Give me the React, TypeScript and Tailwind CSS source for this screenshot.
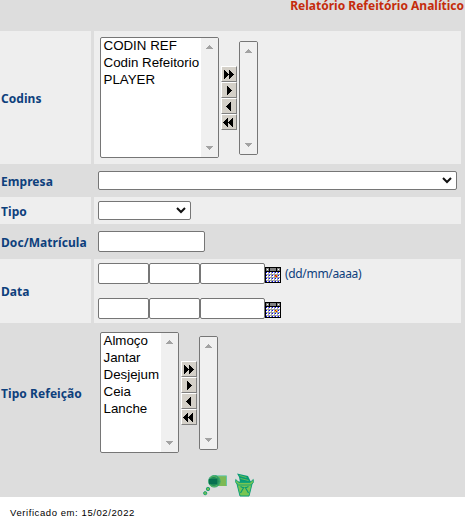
import React from "react";

type ListProps = { items: string[]; className: string };

function ScrollTrack() {
  return (
    <div className="flex w-[17px] shrink-0 flex-col items-center justify-between bg-[#f0f0f0] py-[7px]">
      <svg width="7" height="4" viewBox="0 0 7 4" shapeRendering="crispEdges">
        <path d="M3 0h1v1h1v1h1v1h1v1H0V3h1V2h1V1h1z" fill="#a3a3a3" />
      </svg>
      <svg width="7" height="4" viewBox="0 0 7 4" shapeRendering="crispEdges">
        <path d="M0 0h7v1H6v1H5v1H4v1H3V3H2V2H1V1H0z" fill="#a3a3a3" />
      </svg>
    </div>
  );
}

function ListBox({ items, className }: ListProps) {
  return (
    <div className={`flex h-[121px] shrink-0 overflow-hidden rounded-[2px] border border-[#767676] bg-white ${className}`}>
      <ul className="-mt-px min-w-0 flex-1 pl-[2.5px] font-['Liberation_Sans',Arial,sans-serif] text-[13.33px] leading-[17px] whitespace-nowrap text-black">
        {items.map((item) => (
          <li key={item}>{item}</li>
        ))}
      </ul>
      <ScrollTrack />
    </div>
  );
}

const arrows = [
  "M2 2h1v1h1v1h1v1h1v1h1v1H6v1H5v1H4v1H3v1H2zM7 2h1v1h1v1h1v1h1v1h1v1h-1v1h-1v1H9v1H8v1H7z",
  "M5 2h1v1h1v1h1v1h1v1h1v1H9v1H8v1H7v1H6v1H5z",
  "M9 2v9H8v-1H7V9H6V8H5V7H4V6h1V5h1V4h1V3h1V2z",
  "M6 2v9H5v-1H4V9H3V8H2V7H1V6h1V5h1V4h1V3h1V2zM11 2v9h-1v-1H9V9H8V8H7V7H6V6h1V5h1V4h1V3h1V2z",
];

function MoveButtons() {
  return (
    <div className="flex w-4 shrink-0 flex-col">
      {arrows.map((d) => (
        <button
          key={d}
          className="flex h-4 w-4 items-center border border-t-white border-r-[#808080] border-b-[#808080] border-l-white bg-[#d4d0c8]"
        >
          <svg className="shrink-0" width="13" height="13" viewBox="0 0 13 13" shapeRendering="crispEdges">
            <path d={d} fill="#000" />
          </svg>
        </button>
      ))}
    </div>
  );
}

function Picker({ items, className }: ListProps) {
  return (
    <div className="flex items-center pl-[6px]">
      <ListBox items={items} className={className} />
      <div className="ml-[2px] pt-px">
        <MoveButtons />
      </div>
      <div className="mt-px ml-[2px] flex h-[114px] w-[19px] overflow-hidden rounded-[2px] border border-[#767676]">
        <ScrollTrack />
      </div>
    </div>
  );
}

function Select({ className }: { className: string }) {
  return (
    <div className={`flex h-[19px] items-center justify-end rounded-[2px] border border-[#767676] bg-white pr-1 ${className}`}>
      <svg width="10" height="7" viewBox="0 0 10 7">
        <path d="M1 1l4 4 4-4" fill="none" stroke="#111" strokeWidth="2" />
      </svg>
    </div>
  );
}

function Field({ className }: { className: string }) {
  return <div className={`h-[21px] rounded-[2px] border border-[#767676] bg-white ${className}`} />;
}

const calendarRows = [5, 8, 11];
const calendarCols = [1, 4, 7, 10, 13];

function Calendar({ today }: { today: string }) {
  return (
    <svg width="16" height="16" viewBox="0 0 16 16" shapeRendering="crispEdges">
      <path d="M0 0h16v16H0z" fill="#000" />
      <path d="M1 1h3v3H1zM5 1h6v3H5zM12 1h3v3h-3z" fill="#808080" />
      <path d="M2 2h1v1H2zM13 2h1v1h-1z" fill="#fff" />
      <path d="M1 5h14v10H1z" fill="#a0a0a0" />
      {calendarRows.map((y) =>
        calendarCols.map((x) => (
          <g key={`${x}-${y}`}>
            <path d={`M${x} ${y}h2v2h-2z`} fill="#fff" />
            <path d={`M${x} ${y}h1v1h-1z`} fill="#00f" />
          </g>
        )),
      )}
      <path d="M1 14h1v1H1zM4 14h1v1H4zM7 14h1v1H7zM10 14h1v1h-1zM13 14h1v1h-1z" fill="#00f" />
      <path d="M2 14h1v1H2zM5 14h1v1H5zM8 14h1v1H8zM11 14h1v1h-1zM14 14h1v1h-1z" fill="#fff" />
      <path d="M10 8h2v2h-2z" fill={today} />
      <path d="M10 8h1v1h-1zM11 9h1v1h-1z" fill="#e00000" />
    </svg>
  );
}

function DateFields({ today }: { today: string }) {
  return (
    <div className="flex h-[21px]">
      <Field className="w-[51px]" />
      <Field className="w-[51px]" />
      <Field className="w-[65px]" />
      <div className="pt-1">
        <Calendar today={today} />
      </div>
    </div>
  );
}

type RowProps = { label: string; height: string; light?: boolean; inset?: string; children: React.ReactNode };

function Row({ label, height, light, inset = "pt-[2px]", children }: RowProps) {
  const bg = light ? "bg-[#eee]" : "";
  return (
    <div className={`flex gap-[3px] ${height}`}>
      <div className={`flex w-[91px] shrink-0 items-center pl-px text-[12px] font-bold tracking-[0.06px] whitespace-nowrap text-[#0d407c] ${bg} ${inset}`}>
        {label}
      </div>
      <div className={`w-[367px] shrink-0 ${bg}`}>{children}</div>
    </div>
  );
}

function ConfirmIcon() {
  return (
    <svg width="25" height="22" viewBox="0 0 25 22">
      <path d="M12 1h12v10H12z" fill="#7db954" />
      <path d="M12 .8h11.5v10" fill="none" stroke="#65c6aa" />
      <circle cx="11.3" cy="6.3" r="5.8" fill="#329e62" stroke="#35a873" />
      <circle cx="11" cy="6.3" r="4.4" fill="#1f8a58" />
      <path d="M6 4h8v5H6z" fill="#087050" />
      <path d="M7 10c2 2 5 2 7 0M7 3c2-2 5-2 7 0" fill="none" stroke="#62b85e" strokeWidth=".8" />
      <circle cx="5" cy="14" r="1.7" fill="#6fbe52" stroke="#20a271" />
      <circle cx="2.2" cy="18.2" r="1.6" fill="#6fbe52" stroke="#20a271" />
    </svg>
  );
}

function TrashIcon() {
  return (
    <svg width="19" height="24" viewBox="0 0 19 24">
      <path d="M5 9L4 4 2 .5l11 2.5 3 6z" fill="#079b75" />
      <path d="M4.5 2.5l7 2M5.5 5.5l8 2" stroke="#83c450" strokeWidth=".8" />
      <path d="M1.5 9h16l-3.5 14H5z" fill="#77c552" stroke="#0da078" />
      <path d="M.7 6.5L4 9.5h11l3.3-3v3l-2.5 2.5H3.5L.7 9.5z" fill="#77c552" stroke="#0da078" strokeWidth=".9" />
      <path d="M5.5 13.5l3 1.5M13.5 13.5l-3 1.5M9 14l-3.5 6M10 14l3.5 6" fill="none" stroke="#079b75" strokeWidth="1.2" />
    </svg>
  );
}

export default function App() {
  return (
    <div className="h-[527px] w-[465px] bg-white font-['Noto_Sans',sans-serif]">
      <main className="h-[497px] bg-[#ddd]">
        <header className="h-[31px] pr-px text-right">
          <h1 className="text-[12px] leading-[12px] font-bold whitespace-nowrap text-[#c52c0c]">Relatório Refeitório Analítico</h1>
        </header>
        <Row label="Codins" height="h-[133px]" light>
          <div className="pt-[6px]">
            <Picker items={["CODIN REF", "Codin Refeitorio", "PLAYER"]} className="w-[119px]" />
          </div>
        </Row>
        <Row label="Empresa" height="h-[33px]">
          <div className="pt-[7px] pl-1">
            <Select className="w-[359px]" />
          </div>
        </Row>
        <Row label="Tipo" height="h-[27px]" light>
          <div className="pt-1 pl-1">
            <Select className="w-[93px]" />
          </div>
        </Row>
        <Row label="Doc/Matrícula" height="h-[35px]">
          <div className="pt-[7px] pl-1">
            <Field className="w-[107px]" />
          </div>
        </Row>
        <Row label="Data" height="h-[64px]" light>
          <div className="flex flex-col gap-[14px] pt-1 pl-1">
            <div className="flex">
              <DateFields today="#ff8000" />
              <span className="pt-px pl-1 text-[12px] leading-[20px] tracking-[-0.33px] text-[#0d407c]">(dd/mm/aaaa)</span>
            </div>
            <DateFields today="#ffe000" />
          </div>
        </Row>
        <Row label="Tipo Refeição" height="h-[142px]" inset="pt-0">
          <div className="pt-[9px]">
            <Picker items={["Almoço", "Jantar", "Desjejum", "Ceia", "Lanche"]} className="w-[79px]" />
          </div>
        </Row>
        <div className="flex h-8 items-end gap-[7px] pl-[203px]">
          <ConfirmIcon />
          <TrashIcon />
        </div>
      </main>
      <footer className="pt-[10px] pl-[10px] font-['Liberation_Sans',Arial,sans-serif] text-[9.5px] leading-[12px] tracking-[0.58px] text-black">
        Verificado em: 15/02/2022
      </footer>
    </div>
  );
}
